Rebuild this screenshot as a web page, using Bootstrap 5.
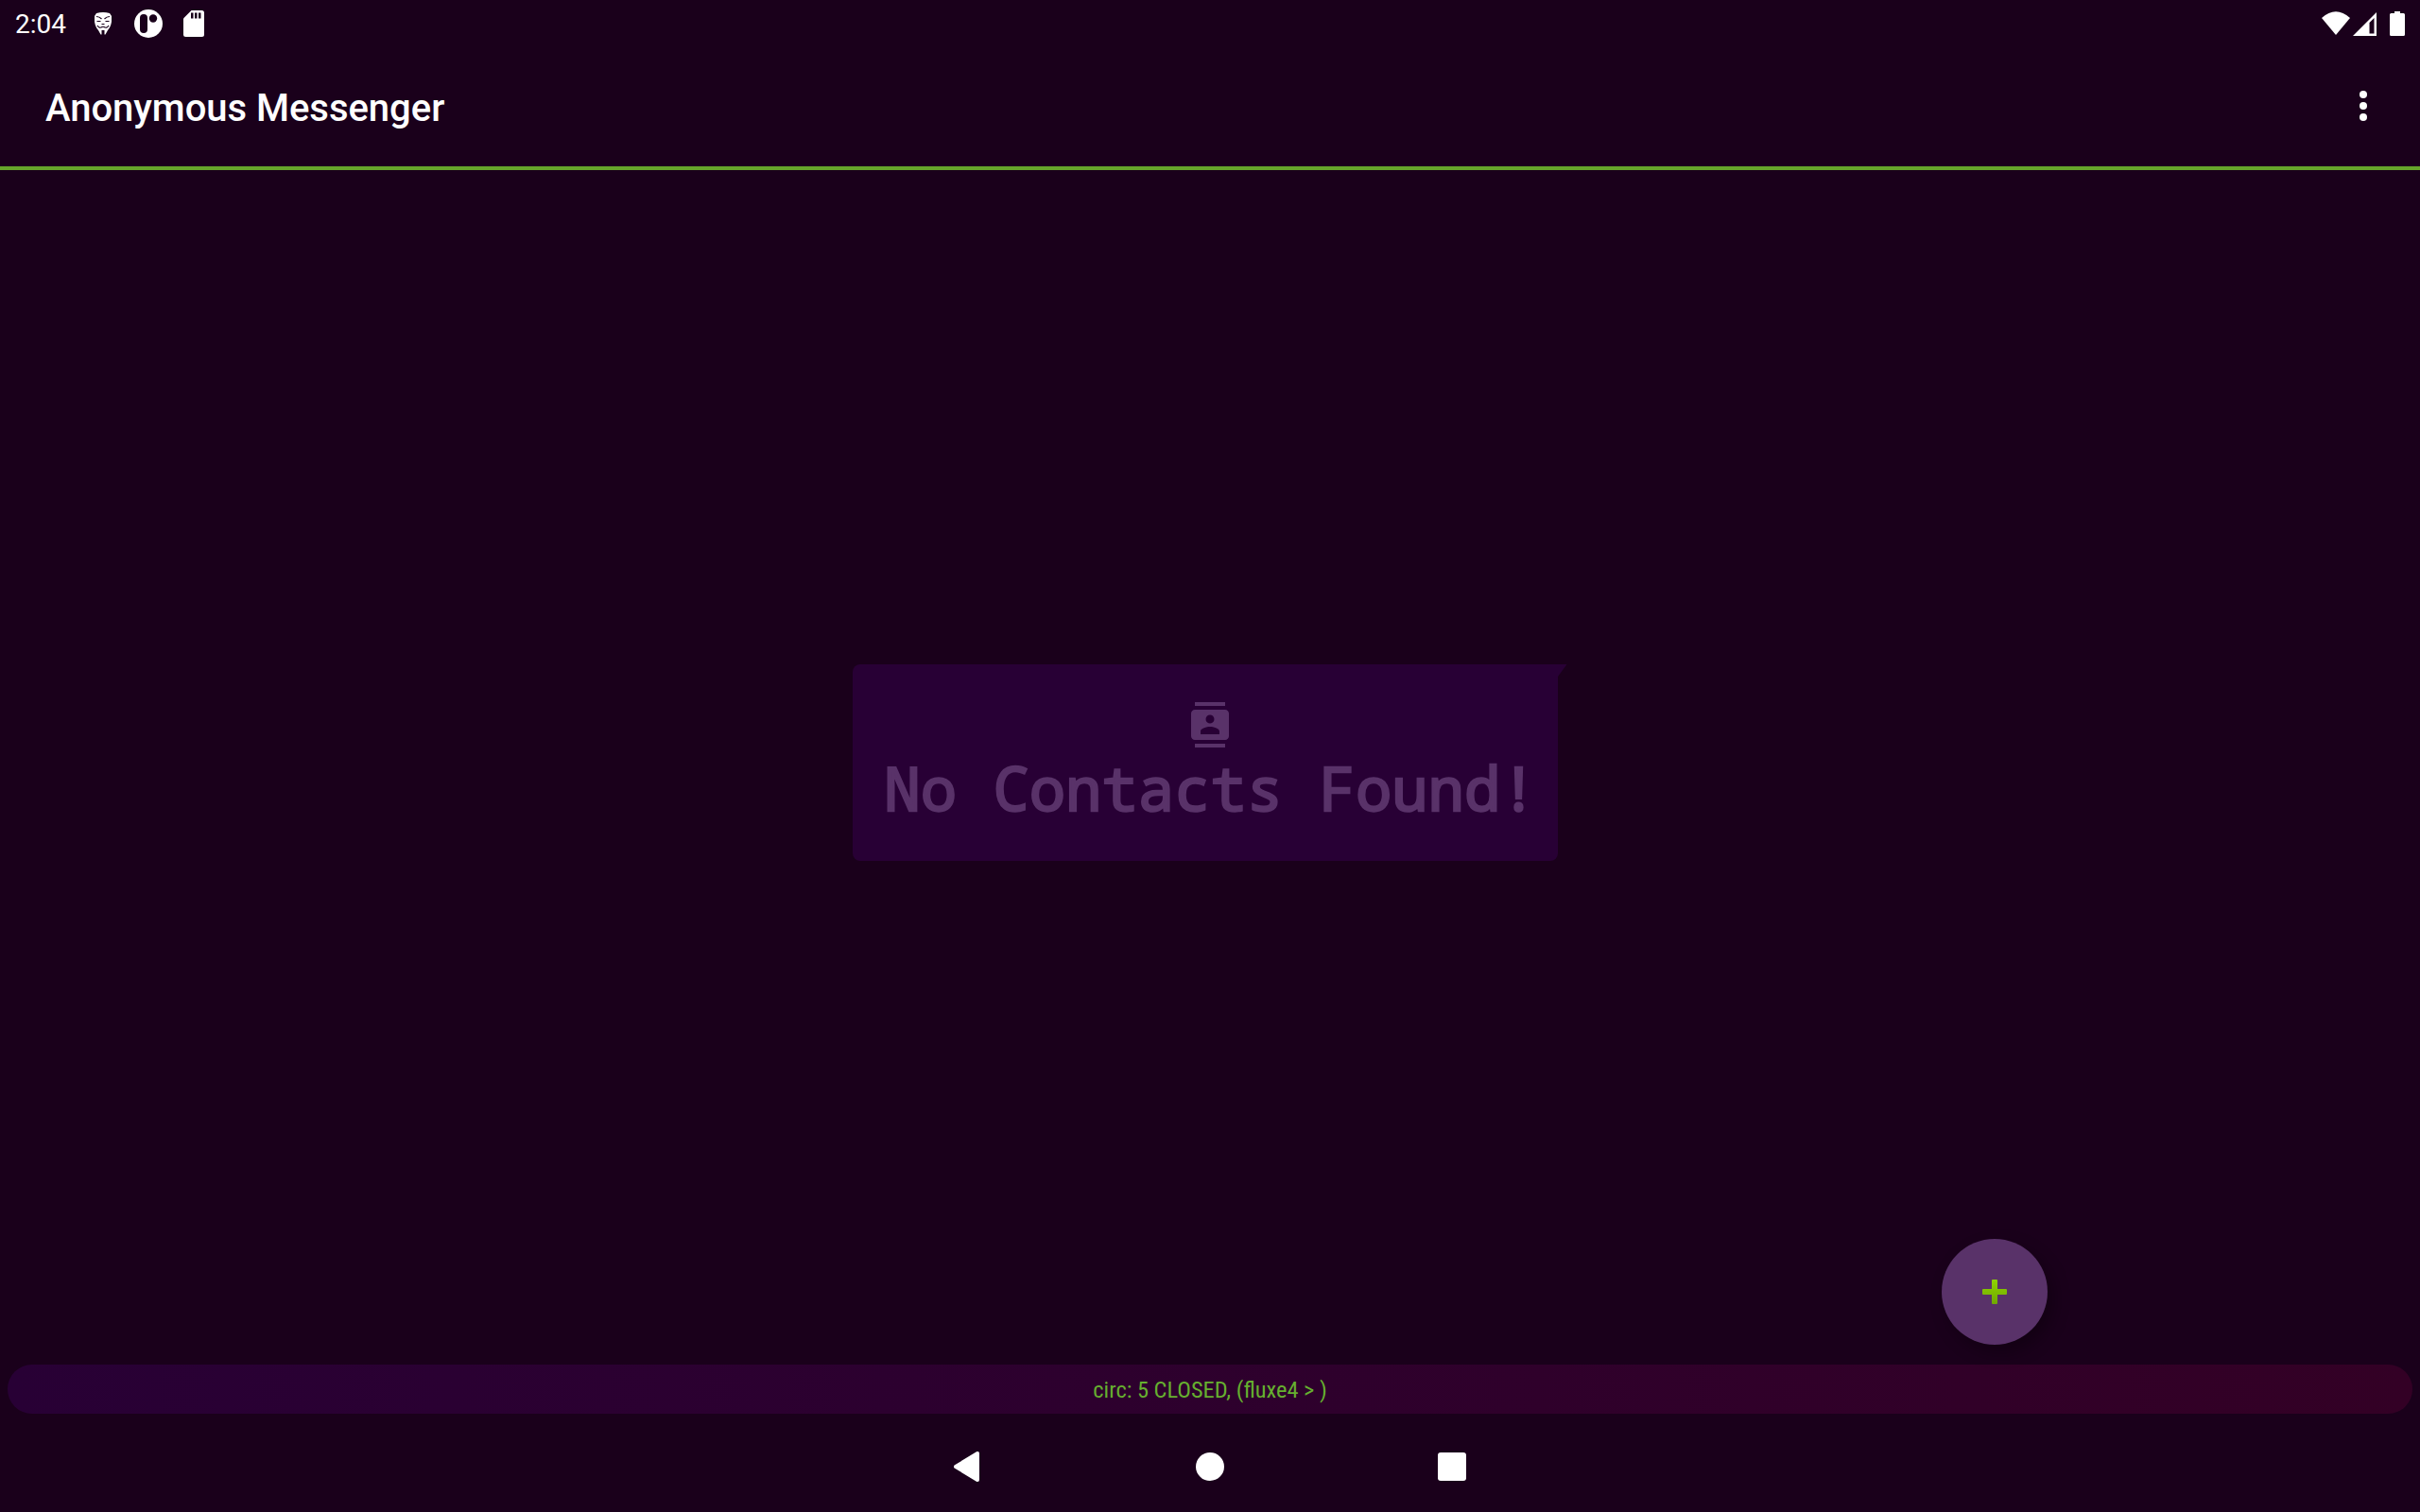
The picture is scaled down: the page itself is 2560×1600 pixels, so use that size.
<!DOCTYPE html>
<html lang="en">
<head>
<meta charset="utf-8">
<meta name="viewport" content="width=device-width, initial-scale=1">
<title>Anonymous Messenger</title>
<link href="https://cdn.jsdelivr.net/npm/bootstrap@5.3.0/dist/css/bootstrap.min.css" rel="stylesheet">
<style>
body{background:#1a001b;color:#fff;font-family:Roboto,sans-serif}
svg{display:block;flex:none}
.status-strip{height:48px;padding:1px 16px 0}
.clock{font-size:28px;line-height:46px;width:84px;padding-top:2px}
.app-bar{height:132px;padding:4px 40px 4px 48px;border-bottom:4px solid #66a52b}
.app-title{font-size:40px;font-weight:500;line-height:48px;letter-spacing:-.03px;margin-top:6px}
.dots-btn{width:40px;height:48px}
.bubble-wrap{padding-bottom:10px}
.bubble{width:746px;height:208px;background:#280035;border-radius:8px 0 8px 8px;padding-top:40px;margin-right:10px;color:#593269}
.bubble-tail{position:absolute;left:100%;top:0}
.bubble-icon{margin-left:10px}
.empty-text{font:400 64px/76px "Noto Sans Mono","Droid Sans Mono","DejaVu Sans Mono",monospace;-webkit-text-stroke:2.4px #593269;white-space:nowrap;letter-spacing:-.05px;margin:5px 0 0 11px}
.fab{position:absolute;left:2054px;bottom:21px;width:112px;height:112px;background:#593269;box-shadow:6px 8px 18px rgba(0,0,0,.3)}
.circuit-bar{height:52px;margin:0 8px;padding-top:1px;border-radius:26px;background:linear-gradient(90deg,#280035,#330025)}
.circuit-text{font-family:"Roboto Condensed",Roboto,sans-serif;font-stretch:75%;font-size:24.4px;line-height:52px;color:#66b02f}
.nav-strip{height:104px;padding-top:8px;gap:226px}
</style>
<script src="https://cdn.jsdelivr.net/npm/bootstrap@5.3.0/dist/js/bootstrap.bundle.min.js"></script>
</head>
<body>
<div class="vh-100 d-flex flex-column overflow-hidden">
  <header>
    <div class="status-strip d-flex align-items-center">
      <span class="clock">2:04</span>
      <svg width="18" height="24" viewBox="0 0 18 24"><path fill="#fff" d="M2 1Q9-1 16 1L18 4V10Q17 16 14 19L11.500 23.500H10.500V19H7.500V23.500H6.500L4 19Q1 16 0 10V4Z"/><path fill="none" stroke="#19001a" stroke-width="1.200" d="M2 4.500Q5 4.500 7.500 7M10.500 7Q13 4.500 16 4.500M2.500 9.500H6.500M11.500 9.500H15.500M7.500 12.500H10.500M3 14Q5 17.500 8 15.500H10Q13 17.500 15 14"/></svg>
      <svg class="ms-4" width="30" height="30" viewBox="0 0 30 30"><circle cx="15" cy="15" r="15" fill="#fff"/><rect x="6" y="5" width="8" height="20" rx="4" fill="#19001a"/><circle cx="20" cy="9.500" r="4.200" fill="#19001a"/></svg>
      <svg style="margin-left:22px" width="22" height="28" viewBox="0 0 22 28"><path fill="#fff" d="M8.500 0H19.500Q22 0 22 2.500V25.500Q22 28 19.500 28H2.500Q0 28 0 25.500V8.500Z"/><path fill="#19001a" d="M8 2.500h2.500v6H8zM12 2.500h2.500v6H12zM16 2.500h2.500v6H16z"/></svg>
      <svg class="ms-auto" width="88" height="28" viewBox="0 0 88 28"><path fill="#fff" d="M0 8Q15-5.500 30 8L15 26Z"/><path fill="#fff" fill-rule="evenodd" d="M58 2V27H33ZM55.500 8L50.500 13V24.500H55.500Z"/><path fill="#fff" d="M77 1h6v2h3.500Q88 3 88 4.500V25.500Q88 27 86.500 27H73.500Q72 27 72 25.500V4.500Q72 3 73.500 3H77Z"/></svg>
    </div>
    <div class="app-bar d-flex align-items-center justify-content-between">
      <h1 class="app-title mb-0">Anonymous Messenger</h1>
      <button class="dots-btn btn p-0 border-0" aria-label="More options"><svg width="40" height="48" fill="#fff"><circle cx="20" cy="12" r="4"/><circle cx="20" cy="24" r="4"/><circle cx="20" cy="36" r="4"/></svg></button>
    </div>
  </header>
  <main class="bubble-wrap flex-grow-1 position-relative d-flex align-items-center justify-content-center">
    <div class="bubble position-relative d-flex flex-column align-items-center">
      <svg class="bubble-tail" width="10" height="13"><path fill="#280035" d="M0 0H9.500L0 13Z"/></svg>
      <svg class="bubble-icon" width="48" height="48" viewBox="0 0 24 24" fill="currentColor"><path d="M20 0H4v2h16V0zM4 24h16v-2H4v2zM20 4H4c-1.100 0-2 .9-2 2v12c0 1.100.9 2 2 2h16c1.100 0 2-.9 2-2V6c0-1.100-.9-2-2-2zm-8 2.750c1.240 0 2.250 1.010 2.250 2.250s-1.010 2.250-2.250 2.250S9.750 10.240 9.750 9 10.760 6.750 12 6.750zM17 17H7v-1.500c0-1.670 3.330-2.500 5-2.500s5 .83 5 2.500V17z"/></svg>
      <div class="empty-text">No Contacts Found!</div>
    </div>
    <button class="fab btn rounded-circle border-0 p-0 d-flex align-items-center justify-content-center" aria-label="Add contact"><svg width="26" height="26" viewBox="0 0 26 26"><defs><linearGradient id="plus" x2="0" y2="1"><stop offset="0" stop-color="#8fd400"/><stop offset="1" stop-color="#6fa800"/></linearGradient></defs><path fill="url(#plus)" d="M11 0h4q1 0 1 1v9h9q1 0 1 1v4q0 1-1 1h-9v9q0 1-1 1h-4q-1 0-1-1v-9H1q-1 0-1-1v-4q0-1 1-1h9V1q0-1 1-1z"/></svg></button>
  </main>
  <div class="circuit-bar text-center"><span class="circuit-text">circ: 5 CLOSED, (fluxe4 &gt; )</span></div>
  <nav class="nav-strip d-flex align-items-center justify-content-center">
    <svg width="30" height="32" viewBox="0 0 30 32"><path fill="#fff" stroke="#fff" stroke-width="4" stroke-linejoin="round" d="M2 16L25 2V30Z"/></svg>
    <svg width="30" height="30"><circle cx="15" cy="15" r="15" fill="#fff"/></svg>
    <svg width="30" height="30"><rect width="30" height="30" rx="3" fill="#fff"/></svg>
  </nav>
</div>
</body>
</html>
